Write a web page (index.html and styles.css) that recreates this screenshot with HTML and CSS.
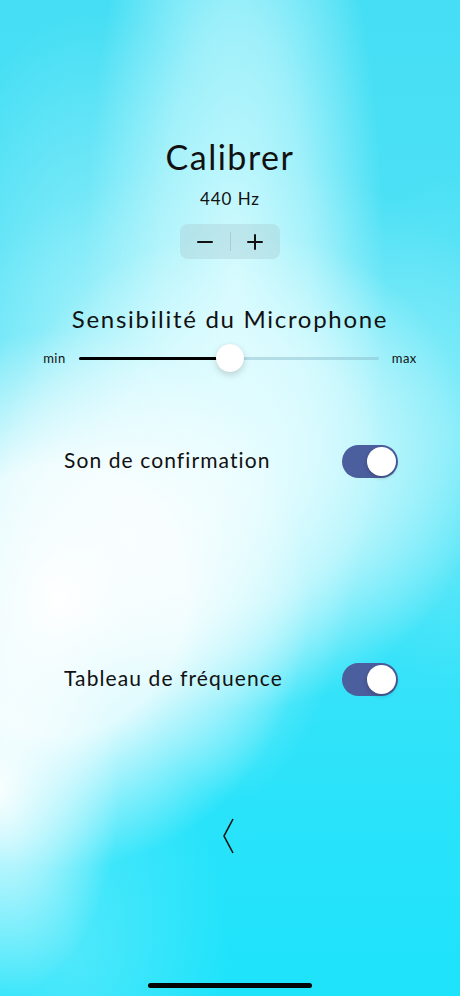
FILE: index.html
```html
<!doctype html>
<html>
  <head>
    <meta charset="utf-8">
    <title>Calibrer</title>
    <link rel="stylesheet" href="styles.css">
  </head>
  <body>
    <main class="screen">
      <h1 class="title">Calibrer</h1>
      <div class="freq">440 Hz</div>
      <div class="stepper">
        <button class="step" aria-label="moins"><span class="minus"></span></button>
        <span class="divider"></span>
        <button class="step" aria-label="plus"><span class="plus"></span></button>
      </div>

      <h2 class="section">Sensibilité du Microphone</h2>
      <div class="slider-row">
        <span class="slider-label">min</span>
        <div class="track">
          <div class="fill" style="width: 50.3%"></div>
          <div class="thumb" style="left: 50.3%"></div>
        </div>
        <span class="slider-label">max</span>
      </div>

      <div class="toggle-row first">
        <span class="toggle-label">Son de confirmation</span>
        <span class="switch on"><span class="knob"></span></span>
      </div>
      <div class="toggle-row second">
        <span class="toggle-label">Tableau de fréquence</span>
        <span class="switch on"><span class="knob"></span></span>
      </div>

      <button class="back" aria-label="retour">
        <svg width="14" height="36" viewBox="0 0 14 36">
          <polyline points="11,1 2,18 11,35" fill="none" stroke="#111" stroke-width="1.6" stroke-linejoin="miter"/>
        </svg>
      </button>

      <div class="home-indicator"></div>
    </main>
  </body>
</html>
```

FILE: styles.css
```css
html, body {
  margin: 0;
  padding: 0;
}
body {
  width: 460px;
  height: 996px;
  overflow: hidden;
  font-family: Lato, "Noto Sans", sans-serif;
  color: #111;
  background-color: #1de3fb;
  background-image:
    radial-gradient(ellipse 250px 270px at 60px 600px, rgba(255,255,255,1) 0%, rgba(255,255,255,0.85) 50%, rgba(255,255,255,0) 100%),
    radial-gradient(ellipse 120px 210px at 0px 790px, rgba(255,255,255,0.95) 0%, rgba(255,255,255,0.45) 55%, rgba(255,255,255,0) 100%),
    radial-gradient(ellipse 240px 240px at 240px 470px, rgba(232,253,255,0.95) 0%, rgba(232,253,255,0.6) 55%, rgba(232,253,255,0) 100%),
    radial-gradient(ellipse 150px 520px at 235px 280px, rgba(214,251,254,0.95) 0%, rgba(214,251,254,0.6) 50%, rgba(214,251,254,0) 100%),
    radial-gradient(ellipse 320px 260px at 230px 420px, rgba(200,248,253,0.6) 0%, rgba(200,248,253,0) 100%),
    radial-gradient(ellipse 130px 260px at 450px 430px, rgba(150,240,250,0.5) 0%, rgba(150,240,250,0) 100%),
    radial-gradient(ellipse 160px 320px at 90px 330px, rgba(170,242,251,0.7) 0%, rgba(170,242,251,0) 100%),
    radial-gradient(ellipse 160px 220px at 70px 950px, rgba(120,236,250,0.55) 0%, rgba(120,236,250,0) 100%),
    linear-gradient(180deg, #45def4 0%, #52e2f6 40%, #2ae3fa 80%, #1de3fb 100%);
}

.screen {
  display: flex;
  flex-direction: column;
  align-items: center;
  height: 996px;
}

.title {
  margin: 137px 0 0;
  font-size: 34px;
  font-weight: 400;
  line-height: 40px;
  letter-spacing: 1.5px;
}
.freq {
  margin-top: 11px;
  font-size: 17px;
  line-height: 22px;
  letter-spacing: 0.9px;
}

.stepper {
  margin-top: 14px;
  display: flex;
  align-items: center;
  width: 100px;
  height: 35px;
  border-radius: 8px;
  background: rgba(170, 205, 212, 0.42);
}
.step {
  flex: 1;
  height: 100%;
  border: 0;
  background: none;
  padding: 0;
  position: relative;
}
.divider {
  width: 1px;
  height: 19px;
  background: rgba(120, 160, 170, 0.35);
}
.minus, .plus, .plus::after {
  position: absolute;
  left: 50%;
  top: 50%;
  width: 16px;
  height: 2px;
  margin: -1px 0 0 -8px;
  background: #111;
  border-radius: 1px;
}
.plus::after {
  content: "";
  transform: rotate(90deg);
  top: 1px;
  left: 8px;
}

.section {
  margin: 45px 0 0;
  font-size: 24px;
  font-weight: 400;
  line-height: 30px;
  letter-spacing: 1.7px;
}

.slider-row {
  margin-top: 8px;
  height: 32px;
  display: flex;
  align-items: center;
  gap: 13px;
}
.slider-label {
  font-size: 13px;
  letter-spacing: 0.5px;
}
.track {
  position: relative;
  width: 300px;
  height: 3px;
  border-radius: 2px;
  background: rgba(130, 185, 200, 0.45);
}
.fill {
  height: 100%;
  border-radius: 2px;
  background: #000;
}
.thumb {
  position: absolute;
  top: 50%;
  width: 28px;
  height: 28px;
  margin: -14px 0 0 -14px;
  border-radius: 50%;
  background: #fff;
  box-shadow: 0 3px 7px rgba(0, 0, 0, 0.16), 0 0 1px rgba(0, 0, 0, 0.12);
}

.toggle-row {
  align-self: stretch;
  display: flex;
  align-items: center;
  justify-content: space-between;
  height: 34px;
  padding: 0 62px 0 64px;
}
.toggle-row.first { margin-top: 70px; }
.toggle-row.second { margin-top: 184px; }
.toggle-label {
  font-size: 21px;
  line-height: 30px;
  margin-top: -3px;
  letter-spacing: 1.1px;
}
.switch {
  display: flex;
  align-items: center;
  justify-content: flex-end;
  width: 56px;
  height: 33px;
  padding: 2px;
  box-sizing: border-box;
  border-radius: 17px;
  background: #4b5e9d;
}
.knob {
  width: 29px;
  height: 29px;
  border-radius: 50%;
  background: #fff;
  box-shadow: 0 2px 4px rgba(0, 0, 0, 0.2);
}

.back {
  margin-top: 122px;
  border: 0;
  background: none;
  padding: 0 2px 0 0;
  display: flex;
}

.home-indicator {
  margin-top: 129px;
  width: 164px;
  height: 5px;
  border-radius: 3px;
  background: #050505;
}
```
